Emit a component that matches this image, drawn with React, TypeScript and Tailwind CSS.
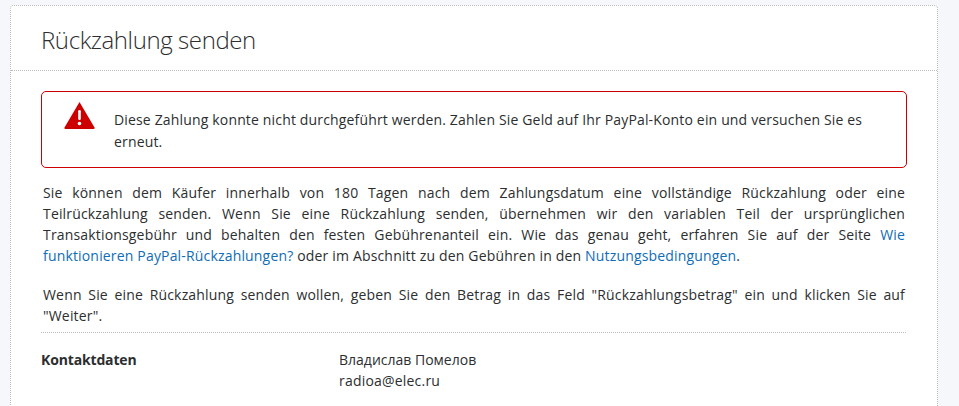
export default function App() {
  return (
    <div className="h-[406px] overflow-hidden bg-[#f5f7fa] pt-[5px] pl-[10px] pr-[21px] text-[14px] leading-[21px] text-[#2c2e2f] [font-family:'Open_Sans','Noto_Sans',sans-serif]">
      <div className="h-[420px] rounded-t-[4px] border border-dotted border-[#bbbbbb] bg-white">
        <div className="h-[65px] border-b border-dotted border-[#bbbbbb] pl-[30px] pt-[16px]">
          <h1 className="text-[24px] font-light leading-[36px] tracking-[-0.4px] text-[#2c2e2f]">Rückzahlung senden</h1>
        </div>
        <div className="px-[30px] pt-[20px]">
          <div className="flex h-[77px] w-[866px] rounded-[5px] border border-[#cc0000] pl-[22px] pt-[10px]">
            <svg width="31" height="27" viewBox="0 0 31 27" className="shrink-0">
              <path d="M15.5 0 L30.5 25.5 Q31 27 29.5 27 L1.5 27 Q0 27 .5 25.5 Z" fill="#cc0000" />
              <rect x="14.2" y="8" width="2.6" height="10" rx="1.2" fill="#fff" />
              <circle cx="15.5" cy="21.5" r="1.8" fill="#fff" />
            </svg>
            <p className="ml-[19px] mt-[7px] w-[760px] tracking-[0.16px] leading-[22px]">
              Diese Zahlung konnte nicht durchgeführt werden. Zahlen Sie Geld auf Ihr PayPal-Konto ein und versuchen Sie es erneut.
            </p>
          </div>
          <p className="mt-[14px] ml-[2px] w-[862px] text-justify tracking-[0.17px]">
            Sie können dem Käufer innerhalb von 180 Tagen nach dem Zahlungsdatum eine vollständige Rückzahlung oder eine Teilrückzahlung senden. Wenn Sie eine Rückzahlung senden, übernehmen wir den variablen Teil der ursprünglichen Transaktionsgebühr und behalten den festen Gebührenanteil ein. Wie das genau geht, erfahren Sie auf der Seite{" "}
            <a className="text-[#0f6cb6]">Wie funktionieren PayPal-Rückzahlungen?</a> oder im Abschnitt zu den Gebühren in den{" "}
            <a className="text-[#0f6cb6]">Nutzungsbedingungen</a>.
          </p>
          <p className="mt-[18px] ml-[2px] w-[862px] text-justify tracking-[0.17px]">
            Wenn Sie eine Rückzahlung senden wollen, geben Sie den Betrag in das Feld "Rückzahlungsbetrag" ein und klicken Sie auf "Weiter".
          </p>
          <div className="mt-[6px] flex w-[865px] border-t border-dotted border-[#bbbbbb] pt-[16px]">
            <div className="w-[298px] font-bold tracking-[-0.15px]">Kontaktdaten</div>
            <div>
              <div>Владислав Помелов</div>
              <div className="tracking-[0.2px]">radioa@elec.ru</div>
            </div>
          </div>
        </div>
      </div>
    </div>
  );
}
